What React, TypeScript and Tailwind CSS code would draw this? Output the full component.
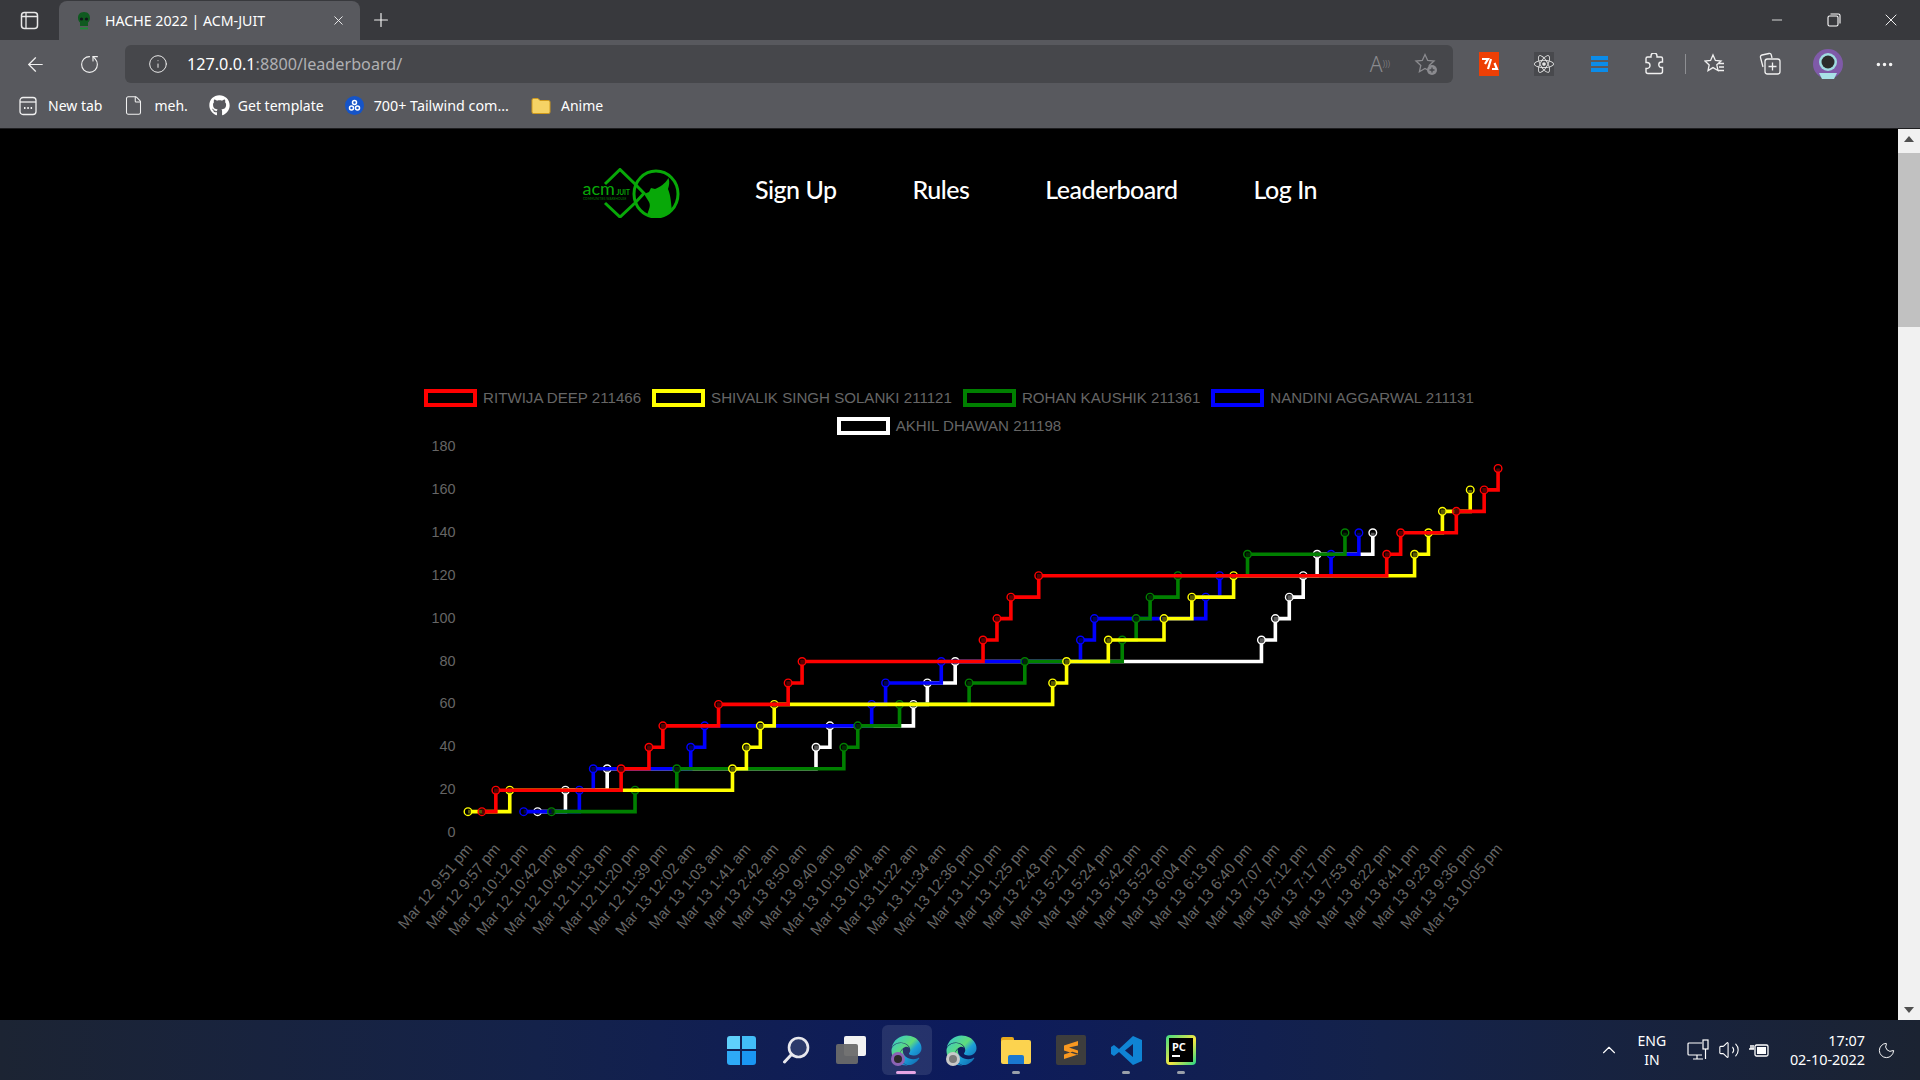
import { ArrowLeft, Ellipsis, Info, Minus, Plus, RotateCw, X, File, ChevronUp, Moon, Volume2 } from "lucide-react";
import { FaEdge, FaGithub, FaReact } from "react-icons/fa";

const chrome = { fontFamily: '"Noto Sans", sans-serif' };

// chart data is [pointIndex, value], taken off the stepped lines
const series = [
    {
        name: "RITWIJA DEEP 211466",
        color: "#ff0000",
        pts: [[1, 10], [2, 20], [11, 30], [13, 40], [14, 50], [18, 60], [23, 70], [24, 80], [37, 90], [38, 100], [39, 110], [41, 120], [66, 130], [67, 140], [71, 150], [73, 160], [74, 170]],
    },
    {
        name: "SHIVALIK SINGH SOLANKI 211121",
        color: "#ffff00",
        pts: [[0, 10], [3, 20], [19, 30], [20, 40], [21, 50], [22, 60], [42, 70], [43, 80], [46, 90], [50, 100], [52, 110], [55, 120], [68, 130], [69, 140], [70, 150], [72, 160]],
    },
    {
        name: "ROHAN KAUSHIK 211361",
        color: "#008000",
        pts: [[6, 10], [12, 20], [15, 30], [27, 40], [28, 50], [31, 60], [36, 70], [40, 80], [47, 90], [48, 100], [49, 110], [51, 120], [56, 130], [63, 140]],
    },
    {
        name: "NANDINI AGGARWAL 211131",
        color: "#0000ff",
        pts: [[4, 10], [8, 20], [9, 30], [16, 40], [17, 50], [29, 60], [30, 70], [34, 80], [44, 90], [45, 100], [53, 110], [54, 120], [62, 130], [64, 140]],
    },
    {
        name: "AKHIL DHAWAN 211198",
        color: "#ffffff",
        pts: [[5, 10], [7, 20], [10, 30], [25, 40], [26, 50], [32, 60], [33, 70], [35, 80], [57, 90], [58, 100], [59, 110], [60, 120], [61, 130], [65, 140]],
    },
];

const labels = [
    "Mar 12 9:51 pm", "Mar 12 9:57 pm", "Mar 12 10:12 pm", "Mar 12 10:42 pm", "Mar 12 10:48 pm", "Mar 12 11:13 pm", "Mar 12 11:20 pm", "Mar 12 11:39 pm",
    "Mar 13 12:02 am", "Mar 13 1:03 am", "Mar 13 1:41 am", "Mar 13 2:42 am", "Mar 13 8:50 am", "Mar 13 9:40 am", "Mar 13 10:19 am", "Mar 13 10:44 am",
    "Mar 13 11:22 am", "Mar 13 11:34 am", "Mar 13 12:36 pm", "Mar 13 1:10 pm", "Mar 13 1:25 pm", "Mar 13 2:43 pm", "Mar 13 5:21 pm", "Mar 13 5:24 pm",
    "Mar 13 5:42 pm", "Mar 13 5:52 pm", "Mar 13 6:04 pm", "Mar 13 6:13 pm", "Mar 13 6:40 pm", "Mar 13 7:07 pm", "Mar 13 7:12 pm", "Mar 13 7:17 pm",
    "Mar 13 7:53 pm", "Mar 13 8:22 pm", "Mar 13 8:41 pm", "Mar 13 9:23 pm", "Mar 13 9:36 pm", "Mar 13 10:05 pm",
];

const px = (i: number) => 468 + 13.92 * i;
const py = (v: number) => 833.1 - 2.145 * v;

function stepPath(pts: number[][]) {
    let d = `M${px(pts[0][0])} ${py(pts[0][1])}`;
    for (const [i, v] of pts.slice(1)) d += `H${px(i)}V${py(v)}`;
    return d;
}

function Chart() {
    const ticks = [0, 20, 40, 60, 80, 100, 120, 140, 160, 180];
    return (
        <svg viewBox="379 440 1140 500" className="w-[1140px] h-[500px] shrink-0" style={{ fontFamily: '"Liberation Sans", sans-serif' }}>
            {ticks.map((t) => (
                <text key={t} x={455.5} y={py(t) + 4} textAnchor="end" fontSize={14.4} fill="#666666">
                    {t}
                </text>
            ))}
            {labels.map((l, n) => (
                <text key={l} textAnchor="end" fontSize={15.1} fill="#666666" transform={`translate(${px(n * 2) + 5} ${849}) rotate(-50)`}>
                    {l}
                </text>
            ))}
            {[...series].reverse().map((s) => (
                <g key={s.name}>
                    <path d={stepPath(s.pts)} fill="none" stroke={s.color} strokeWidth={3.6} />
                    {s.pts.map(([i, v]) => (
                        <circle key={i} cx={px(i)} cy={py(v)} r={3.8} fill="rgba(0,0,0,0.65)" stroke={s.color} strokeWidth={1.4} />
                    ))}
                </g>
            ))}
        </svg>
    );
}

function Logo() {
    const g = "#08a808";
    return (
        <svg viewBox="0 0 100 50" className="w-[100px] h-[50px]">
            <path d="M24 16 L39 1.500 L54 16 L63 25.300 L54 35 L39 49 L24 35" fill="none" stroke={g} strokeWidth={3} />
            <ellipse cx="75" cy="26" rx="22" ry="23" fill="none" stroke={g} strokeWidth={3} />
            <path d="M66 47 C68 41 70 38 68 34 L63 26 L68 24 L70 20 L74 21 C79 19 84 16 87.500 10 C89 14 88 18 87 21 C90 28 90 36 91 43 C87 47 83 49 78 49 C73 49.500 69 48.500 66 47 Z" fill={g} />
            <text x="1.500" y="27" fontSize="18" fill={g} fontFamily="Lato, sans-serif">acm</text>
            <text x="35.500" y="27" fontSize="6.500" fill={g} fontFamily="Lato, sans-serif" fontWeight={700}>JUIT</text>
            <text x="2" y="31.500" fontSize="3.200" fill="#067a06" fontFamily="Lato, sans-serif">COMMUNITIES WAREHOUSE</text>
        </svg>
    );
}

function EdgeIcon({ size, badge }: { size: number; badge: "astro" | "user" }) {
    return (
        <div className="relative" style={{ width: size, height: size }}>
            <FaEdge size={size} fill="url(#edge-grad)" />
            <div className={`absolute left-0 bottom-0 w-[14px] h-[14px] rounded-full flex items-center justify-center ${badge === "astro" ? "bg-[#8b63b5]" : "bg-[#c9c9c9]"}`}>
                <div className={`w-[8px] h-[8px] rounded-full ${badge === "astro" ? "bg-[#2a2a2a]" : "bg-[#7a7a7a]"}`} />
            </div>
        </div>
    );
}

const bookmarkText = "text-[14px] text-white whitespace-nowrap";

function TabStrip() {
    return (
        <div className="h-10 flex items-end bg-[#38393d] shrink-0">
            <div className="w-[59px] h-10 flex items-center justify-center">
                <svg width="19" height="19" viewBox="0 0 19 19" fill="none" stroke="#e8e8e8" strokeWidth="1.5">
                    <rect x="1.5" y="1.5" width="16" height="16" rx="3" />
                    <path d="M6 1.5V17.5M1.5 5.5H17.5" strokeWidth="1.3" />
                </svg>
            </div>
            <div className="w-[301px] h-[39px] rounded-t-lg bg-[#58595e] flex items-center pl-4 pr-[14px]">
                <svg width="18" height="20" viewBox="0 0 18 20" className="shrink-0">
                    <path d="M9 1C4.5 1 3 4 3 7c0 2 1 3.5 2 4.5V15h8v-3.5c1-1 2-2.5 2-4.5 0-3-1.500-6-6-6z" fill="#0f5a20" />
                    <circle cx="6.500" cy="8" r="1.600" fill="#10151a" />
                    <circle cx="11.500" cy="8" r="1.600" fill="#10151a" />
                    <rect x="5" y="16.500" width="8" height="1.800" fill="#1c8a35" />
                </svg>
                <span className="ml-3 flex-1 text-[14.200px] text-white whitespace-nowrap" style={chrome}>HACHE 2022 | ACM-JUIT</span>
                <X size={15} color="#f0f0f0" strokeWidth={1.5} />
            </div>
            <div className="w-[42px] h-10 flex items-center justify-center">
                <Plus size={22} color="#f0f0f0" strokeWidth={1.3} />
            </div>
            <div className="flex-1" />
            <div className="flex h-10 items-center text-white w-[172px]">
                <div className="w-[57px] flex justify-center"><Minus size={16} strokeWidth={1.2} /></div>
                <div className="w-[57px] flex justify-center">
                    <svg width="14" height="14" viewBox="0 0 14 14" fill="none" stroke="#fff" strokeWidth="1.100">
                        <rect x="1" y="3" width="10" height="10" rx="1.500" />
                        <path d="M3.500 1H11.500a1.500 1.500 0 0 1 1.500 1.500V10.500" />
                    </svg>
                </div>
                <div className="w-[58px] flex justify-center"><X size={20} strokeWidth={1.1} /></div>
            </div>
        </div>
    );
}

function Toolbar() {
    const cell = "w-[55px] flex items-center justify-center shrink-0";
    return (
        <div className="h-12 flex items-center bg-[#58595e] shrink-0">
            <div className="w-[62px] flex justify-center pl-2"><ArrowLeft size={23} color="#f0f0f0" strokeWidth={1.3} /></div>
            <div className="w-[54px] flex justify-center"><RotateCw size={21} color="#f0f0f0" strokeWidth={1.3} className="-scale-x-100 rotate-90" /></div>
            <div className="ml-[9px] flex-1 h-[38px] rounded-md bg-[#46474b] flex items-center pl-[23px] pr-3">
                <Info size={20} color="#e8e8e8" strokeWidth={1.2} />
                <span className="ml-[19px] flex-1 text-[16.200px] whitespace-nowrap" style={chrome}>
                    <span className="text-white">127.0.0.1</span>
                    <span className="text-[#b0b0b3]">:8800/leaderboard/</span>
                </span>
                <span className="mr-[24px] text-[21px] text-[#8b8b8f] leading-none font-light" style={chrome}>A<sup className="text-[9px]">)))</sup></span>
                <svg width="24" height="24" viewBox="0 0 24 24" fill="none" stroke="#8b8b8f" strokeWidth="1.300" className="mr-[3px]">
                    <path d="M11 2.500l2.700 6 6.300.6-4.800 4.300 1.400 6.300L11 16.500l-5.600 3.200 1.400-6.300L2 9.100l6.300-.6z" />
                    <circle cx="18" cy="18" r="5" fill="#8b8b8f" stroke="none" />
                    <path d="M18 15.500v5M15.500 18h5" stroke="#46474b" />
                </svg>
            </div>
            <div className="w-[467px] flex items-center pl-[8.500px] shrink-0">
                <div className={cell}>
                    <svg width="20" height="24" viewBox="0 0 20 24">
                        <rect width="20" height="24" fill="#ee3f05" />
                        <path d="M3 7H9L6 12M9 17L12 7M13 17H18L15.500 11" fill="none" stroke="#fff" strokeWidth="2.200" />
                    </svg>
                </div>
                <div className={cell}><div className="w-5 h-6 bg-[#48494d] flex items-center justify-center"><FaReact size={20} color="#e4e4e4" /></div></div>
                <div className={cell}>
                    <div className="w-[17px] flex flex-col gap-[2px]">
                        <div className="h-[4px] bg-[#0b8ce9]" />
                        <div className="h-[4px] bg-[#0b8ce9]" />
                        <div className="h-[4px] bg-[#0b8ce9]" />
                    </div>
                </div>
                <div className={cell}>
                    <svg width="20" height="22" viewBox="0 0 20 22" fill="none" stroke="#f0f0f0" strokeWidth="1.400">
                        <path d="M7 4V3a3 3 0 0 1 6 0v1h4a1.500 1.500 0 0 1 1.500 1.500V9h-1a2.700 2.700 0 0 0 0 5.500h1v4a2 2 0 0 1-2 2H4a2 2 0 0 1-2-2v-3h1a3 3 0 0 0 0-6H2V5.500A1.500 1.500 0 0 1 3.500 4z" />
                    </svg>
                </div>
                <div className="w-px h-[20px] bg-[#8e8f93] ml-[3px] mr-[2px] shrink-0" />
                <div className={cell}>
                    <svg width="22" height="22" viewBox="0 0 22 22" fill="none" stroke="#f0f0f0" strokeWidth="1.300">
                        <path d="M9 2l2.400 5.500 5.600.5-4.200 3.800 1.200 5.700L9 14.600l-5 3 1.200-5.700L1 8l5.600-.5zM14 10.500h6M15 14h5M14 17.500h6" />
                    </svg>
                </div>
                <div className={cell}>
                    <svg width="22" height="24" viewBox="0 0 22 24" fill="none" stroke="#f0f0f0" strokeWidth="1.300">
                        <path d="M4 15L1.500 5.500a2 2 0 0 1 1.500-2.500l7-1.500a2 2 0 0 1 2.300 1.500L13 6" />
                        <rect x="6" y="7" width="15" height="15" rx="2.500" />
                        <path d="M13.500 10.500v8M9.500 14.500h8" />
                    </svg>
                </div>
                <div className="w-[58px] flex justify-center shrink-0 ml-px">
                    <svg width="30" height="30" viewBox="0 0 30 30">
                        <ellipse cx="15" cy="15" rx="15" ry="15" fill="#7f5aa8" />
                        <circle cx="15" cy="13" r="9" fill="#9fdbe0" />
                        <circle cx="15" cy="13" r="6.500" fill="#2b2b2b" />
                        <path d="M6 24h18l-3 6H9z" fill="#a8e2e6" />
                    </svg>
                </div>
                <div className="w-[55px] flex justify-center shrink-0"><Ellipsis size={21} color="#f4f4f4" strokeWidth={2} /></div>
            </div>
        </div>
    );
}

function Bookmarks() {
    return (
        <div className="h-[41px] pb-[5px] flex items-center bg-[#58595e] border-b border-[#1e1e20] pl-[19px] shrink-0" style={chrome}>
            <svg width="18" height="20" viewBox="0 0 18 20" fill="none" stroke="#f0f0f0" strokeWidth="1.300">
                <rect x="1" y="1.500" width="16" height="17" rx="3" />
                <path d="M1 6H17" />
                <path d="M5 12h1.500M8.300 12h1.500M11.600 12h1.500" strokeWidth="2" />
            </svg>
            <span className={`ml-[11px] ${bookmarkText}`}>New tab</span>
            <File size={21} color="#f0f0f0" strokeWidth={1.2} className="ml-[21px]" />
            <span className={`ml-[10px] ${bookmarkText}`}>meh.</span>
            <FaGithub size={21} color="#fff" className="ml-[21px]" />
            <span className={`ml-[8px] ${bookmarkText}`}>Get template</span>
            <div className="ml-[21px] w-[19px] h-[19px] rounded-full bg-[#1554c8] flex items-center justify-center">
                <svg width="13" height="13" viewBox="0 0 13 13" fill="none" stroke="#fff" strokeWidth="1.500">
                    <circle cx="6.500" cy="3.500" r="2" /><circle cx="3.500" cy="9" r="2" /><circle cx="9.500" cy="9" r="2" />
                </svg>
            </div>
            <span className={`ml-[10px] text-[14.300px] text-white whitespace-nowrap`}>700+ Tailwind com...</span>
            <svg width="20" height="18" viewBox="0 0 20 18" className="ml-[22px]">
                <path d="M1 3a1.500 1.500 0 0 1 1.500-1.500H7l2 2h8.500A1.500 1.500 0 0 1 19 5v10a1.500 1.500 0 0 1-1.500 1.500h-15A1.500 1.500 0 0 1 1 15z" fill="#f6d365" stroke="#d09a1c" strokeWidth="1" />
            </svg>
            <span className={`ml-[10px] ${bookmarkText}`}>Anime</span>
        </div>
    );
}

function Scrollbar() {
    return (
        <div className="w-[22px] bg-[#f1f1f1] flex flex-col items-center justify-between shrink-0 relative">
            <div className="h-[20px] flex items-center justify-center">
                <div className="w-0 h-0 border-x-[5px] border-x-transparent border-b-[6px] border-b-[#505050]" />
            </div>
            <div className="absolute top-[24px] left-0 right-0 h-[174px] bg-[#c1c1c1]" />
            <div className="h-[20px] flex items-center justify-center">
                <div className="w-0 h-0 border-x-[5px] border-x-transparent border-t-[6px] border-t-[#505050]" />
            </div>
        </div>
    );
}

function TaskItem({ children, dot }: { children: React.ReactNode; dot?: string }) {
    return (
        <div className="relative w-[55px] h-[60px] flex items-center justify-center">
            {children}
            {dot && <div className={`absolute bottom-[6px] left-1/2 -translate-x-1/2 h-[3px] rounded-full ${dot}`} />}
        </div>
    );
}

function Taskbar() {
    return (
        <div className="relative h-[60px] shrink-0 flex items-center justify-center bg-[linear-gradient(90deg,#1c2433_0%,#14224a_28%,#0d1b5c_50%,#14224a_72%,#1b2332_100%)]">
            <svg width="0" height="0" className="absolute">
                <defs>
                    <linearGradient id="edge-grad" x1="0" y1="0" x2="1" y2="1">
                        <stop offset="0%" stopColor="#33c6d8" />
                        <stop offset="45%" stopColor="#5fdc7a" />
                        <stop offset="60%" stopColor="#1d9fd8" />
                        <stop offset="100%" stopColor="#0b5fa8" />
                    </linearGradient>
                </defs>
            </svg>
            <div className="flex ml-[2px]">
                <TaskItem>
                    <div className="grid grid-cols-2 gap-[2px] w-[29px] h-[29px]">
                        <div className="rounded-tl-[3px] bg-[#5fd0fb]" />
                        <div className="rounded-tr-[3px] bg-[#42bdf7]" />
                        <div className="rounded-bl-[3px] bg-[#2eaaf6]" />
                        <div className="rounded-br-[3px] bg-[#1a96f2]" />
                    </div>
                </TaskItem>
                <TaskItem>
                    <svg width="28" height="28" viewBox="0 0 28 28" fill="none">
                        <circle cx="16.500" cy="11.500" r="9.500" stroke="#e8e8ee" strokeWidth="2.600" fill="#2c3a6b" />
                        <path d="M9.500 18.500L2.500 26" stroke="#e8e8ee" strokeWidth="3" strokeLinecap="round" />
                    </svg>
                </TaskItem>
                <TaskItem>
                    <div className="relative w-[30px] h-[28px]">
                        <div className="absolute left-[8px] top-0 w-[22px] h-[20px] rounded-[2px] bg-[#f2f2f2]" />
                        <div className="absolute left-0 top-[8px] w-[22px] h-[20px] rounded-[2px] bg-[#6a6a6a]/95" />
                    </div>
                </TaskItem>
                <TaskItem dot="w-[20px] bg-[#e5a5e5]">
                    <div className="absolute left-[3px] top-[5px] w-[50px] h-[50px] rounded-md bg-white/10" />
                    <div className="relative"><EdgeIcon size={31} badge="astro" /></div>
                </TaskItem>
                <TaskItem><EdgeIcon size={31} badge="user" /></TaskItem>
                <TaskItem dot="w-[8px] bg-[#9aa0aa]">
                    <div className="relative w-[30px] h-[27px]">
                        <div className="absolute left-0 top-0 w-[13px] h-[8px] rounded-t-[2px] bg-[#e8a91c]" />
                        <div className="absolute left-0 top-[3px] w-[30px] h-[24px] rounded-[2px] bg-[#fcd34f]" />
                        <div className="absolute left-[7px] bottom-0 w-[16px] h-[9px] rounded-t-[2px] bg-[#1a78d0]" />
                    </div>
                </TaskItem>
                <TaskItem>
                    <div className="w-[30px] h-[30px] rounded-[2px] bg-[#3d3d3d] flex items-center justify-center">
                        <svg width="18" height="20" viewBox="0 0 18 20" fill="#f89820">
                            <path d="M16 1L2 5.500v5L16 15v-4.500L7 7.500l9-2zM2 9l14 4.500v-.500V14.500L2 19v-4.500l9-3z" />
                        </svg>
                    </div>
                </TaskItem>
                <TaskItem dot="w-[8px] bg-[#9aa0aa]">
                    <svg width="31" height="31" viewBox="0 0 31 31">
                        <path d="M22 1L31 5V26L22 30L8 17L3 21L0 19V12L3 10L8 14zM22 9L14 15.500L22 22z" fill="#0f84d4" />
                    </svg>
                </TaskItem>
                <TaskItem dot="w-[8px] bg-[#9aa0aa]">
                    <div className="relative w-[30px] h-[30px] bg-[linear-gradient(135deg,#3ddc84,#f5e642_55%,#21d789)] rounded-sm flex items-center justify-center">
                        <div className="w-[24px] h-[24px] bg-black text-white text-[11px] leading-none font-bold pt-[3px] pl-[3px]" style={chrome}>
                            PC
                            <div className="w-[8px] h-[2px] bg-white mt-[3px]" />
                        </div>
                    </div>
                </TaskItem>
            </div>
            <div className="absolute right-0 top-0 h-[60px] flex items-center text-white" style={chrome}>
                <ChevronUp size={22} strokeWidth={1.2} className="mr-[15px]" />
                <div className="text-[14px] leading-[19px] text-center w-[34px] mr-[18px]">ENG<br />IN</div>
                <svg width="22" height="22" viewBox="0 0 22 22" fill="none" stroke="#fff" strokeWidth="1.200" className="mr-[9px]">
                    <path d="M15 4H2a1 1 0 0 0-1 1v10a1 1 0 0 0 1 1h13M6 20h10M10 16v4" />
                    <rect x="16" y="1" width="5" height="9" fill="none" />
                    <path d="M18.500 10V20" />
                </svg>
                <Volume2 size={22} strokeWidth={1.2} className="mr-[8px]" />
                <svg width="22" height="20" viewBox="0 0 22 20" fill="none" stroke="#fff" strokeWidth="1.300" className="mr-[20px]">
                    <rect x="7" y="5" width="13" height="11" rx="1.500" />
                    <rect x="9" y="7" width="9" height="7" fill="#fff" stroke="none" />
                    <path d="M1 9h5M3 5v4M5 5v4" strokeWidth="1.500" />
                </svg>
                <div className="text-[14.400px] leading-[19.500px] text-right mr-[12px]">17:07<br />02-10-2022</div>
                <Moon size={19} strokeWidth={1.2} className="mr-[24px]" />
            </div>
        </div>
    );
}

export default function App() {
    return (
        <div className="w-[1920px] h-[1080px] overflow-hidden flex flex-col bg-black">
            <TabStrip />
            <Toolbar />
            <Bookmarks />
            <div className="flex-1 flex min-h-0">
                <div className="flex-1 flex flex-col items-center pt-[39px] overflow-hidden">
                    <div className="flex items-center gap-[74px]">
                        <Logo />
                        <nav className="flex items-center gap-[76px] -mt-[7px] text-white text-[25px] tracking-[-0.5px] font-medium" style={{ fontFamily: "Lato, sans-serif" }}>
                            <span>Sign Up</span>
                            <span>Rules</span>
                            <span>Leaderboard</span>
                            <span>Log In</span>
                        </nav>
                    </div>
                    <div className="mt-[166px] w-[1060px] flex flex-wrap justify-center gap-x-[11px]" style={{ fontFamily: '"Liberation Sans", sans-serif' }}>
                        {series.map((s) => (
                            <div key={s.name} className="h-[28px] flex items-center gap-[6px]">
                                <div className="w-[53px] h-[18px] border-4 bg-black" style={{ borderColor: s.color }} />
                                <span className="text-[15.100px] text-[#666666] whitespace-nowrap">{s.name}</span>
                            </div>
                        ))}
                    </div>
                    <Chart />
                </div>
                <Scrollbar />
            </div>
            <Taskbar />
        </div>
    );
}
